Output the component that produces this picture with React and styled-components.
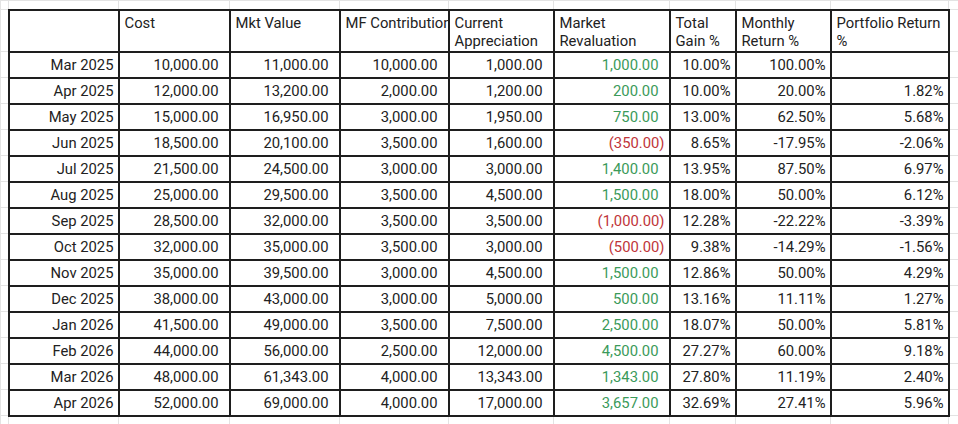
import React from "react";
import styled, { createGlobalStyle } from "styled-components";

const Global = createGlobalStyle`
  html, body { margin: 0; padding: 0; background: #ffffff; }
  body { font-family: Roboto, "Liberation Sans", Arial, sans-serif; color: #222222; overflow: hidden; }
`;

const Sheet = styled.table`
  border-collapse: collapse;
  table-layout: fixed;
  width: 970px;
  font-size: 14.8px;
  color: #222222;
`;

const GapRow = styled.tr`
  height: ${(p) => p.$h}px;
`;

const HeadRow = styled.tr`
  height: 42px;
`;

const DataRow = styled.tr`
  height: 26px;
`;

const Gutter = styled.td`
  border: 1px solid #e3e3e3;
  padding: 0;
`;

const Head = styled.td`
  border: 2px solid #1e1e1e;
  padding: 3px 4px 0 5px;
  vertical-align: top;
  text-align: left;
  line-height: 18px;
  white-space: ${(p) => (p.$clip ? "nowrap" : "normal")};
  overflow: hidden;
`;

const toneColor = { plain: "#222222", up: "#3b9a5a", down: "#c0353a" };

const Cell = styled.td`
  border: 2px solid #1e1e1e;
  padding: 0 ${(p) => (p.$reserve ? 10 : 4)}px 0 4px;
  text-align: right;
  vertical-align: middle;
  white-space: nowrap;
  overflow: hidden;
  line-height: 20px;
  color: ${(p) => toneColor[p.$tone || "plain"]};
`;

const widths = [8, 110, 111, 110, 109, 105, 116, 66, 95, 118, 22];

const headers = [
  { t: "" },
  { t: "Cost" },
  { t: "Mkt Value" },
  { t: "MF Contribution", clip: true },
  { t: "Current Appreciation" },
  { t: "Market Revaluation" },
  { t: "Total Gain %" },
  { t: "Monthly Return %" },
  { t: "Portfolio Return %" },
];

const rows = [
  ["Mar 2025", "10,000.00", "11,000.00", "10,000.00", "1,000.00", "1,000.00", "10.00%", "100.00%", ""],
  ["Apr 2025", "12,000.00", "13,200.00", "2,000.00", "1,200.00", "200.00", "10.00%", "20.00%", "1.82%"],
  ["May 2025", "15,000.00", "16,950.00", "3,000.00", "1,950.00", "750.00", "13.00%", "62.50%", "5.68%"],
  ["Jun 2025", "18,500.00", "20,100.00", "3,500.00", "1,600.00", "(350.00)", "8.65%", "-17.95%", "-2.06%"],
  ["Jul 2025", "21,500.00", "24,500.00", "3,000.00", "3,000.00", "1,400.00", "13.95%", "87.50%", "6.97%"],
  ["Aug 2025", "25,000.00", "29,500.00", "3,500.00", "4,500.00", "1,500.00", "18.00%", "50.00%", "6.12%"],
  ["Sep 2025", "28,500.00", "32,000.00", "3,500.00", "3,500.00", "(1,000.00)", "12.28%", "-22.22%", "-3.39%"],
  ["Oct 2025", "32,000.00", "35,000.00", "3,500.00", "3,000.00", "(500.00)", "9.38%", "-14.29%", "-1.56%"],
  ["Nov 2025", "35,000.00", "39,500.00", "3,000.00", "4,500.00", "1,500.00", "12.86%", "50.00%", "4.29%"],
  ["Dec 2025", "38,000.00", "43,000.00", "3,000.00", "5,000.00", "500.00", "13.16%", "11.11%", "1.27%"],
  ["Jan 2026", "41,500.00", "49,000.00", "3,500.00", "7,500.00", "2,500.00", "18.07%", "50.00%", "5.81%"],
  ["Feb 2026", "44,000.00", "56,000.00", "2,500.00", "12,000.00", "4,500.00", "27.27%", "60.00%", "9.18%"],
  ["Mar 2026", "48,000.00", "61,343.00", "4,000.00", "13,343.00", "1,343.00", "27.80%", "11.19%", "2.40%"],
  ["Apr 2026", "52,000.00", "69,000.00", "4,000.00", "17,000.00", "3,657.00", "32.69%", "27.41%", "5.96%"],
];

const toneOf = (v) => (v.startsWith("(") ? "down" : "up");
const isAccounting = (i) => i >= 1 && i <= 5;

export default function App() {
  return (
    <>
      <Global />
      <Sheet>
        <colgroup>
          {widths.map((w, i) => (
            <col key={i} style={{ width: w }} />
          ))}
        </colgroup>
        <tbody>
          <GapRow $h={9}>
            {widths.map((_, i) => (
              <Gutter key={i} />
            ))}
          </GapRow>
          <HeadRow>
            <Gutter />
            {headers.map((h, i) => (
              <Head key={i} $clip={h.clip}>
                {h.t}
              </Head>
            ))}
            <Gutter />
          </HeadRow>
          {rows.map((r) => (
            <DataRow key={r[0]}>
              <Gutter />
              {r.map((v, i) => (
                <Cell
                  key={i}
                  $tone={i === 5 ? toneOf(v) : "plain"}
                  $reserve={isAccounting(i) && !v.startsWith("(")}
                >
                  {v}
                </Cell>
              ))}
              <Gutter />
            </DataRow>
          ))}
          <GapRow $h={26}>
            {widths.map((_, i) => (
              <Gutter key={i} />
            ))}
          </GapRow>
        </tbody>
      </Sheet>
    </>
  );
}
